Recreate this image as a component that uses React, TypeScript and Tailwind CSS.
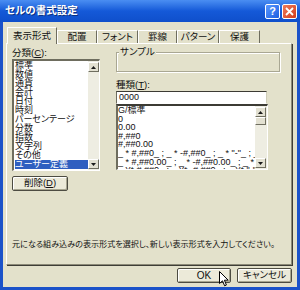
import React from "react";

const categories = [
  "標準",
  "数値",
  "通貨",
  "会計",
  "日付",
  "時刻",
  "パーセンテージ",
  "分数",
  "指数",
  "文字列",
  "その他",
  "ユーザー定義",
];

const formats = [
  "G/標準",
  "0",
  "0.00",
  "#,##0",
  "#,##0.00",
  '_ * #,##0_ ; _ * -#,##0_ ; _ * "-"_ ; _ @_',
  '_ * #,##0.00_ ; _ * -#,##0.00_ ; _ * "-"??_ ; _ @_',
  '_ ¥* #,##0_ ; _ ¥* -#,##0_ ; _ ¥* "-"_ ; _ @_',
];

const tabs = [
  { label: "表示形式", w: "w-[50px]", active: true },
  { label: "配置", w: "w-[40px]", active: false },
  { label: "フォント", w: "w-[41px]", active: false },
  { label: "罫線", w: "w-[39px]", active: false },
  { label: "パターン", w: "w-[42px]", active: false },
  { label: "保護", w: "w-[41px]", active: false },
];

// little arrow button used on the scroll bars
const ScrollBtn = ({ up }: { up: boolean }) => (
  <div className="flex h-[10px] w-[11px] items-center justify-center border border-b-[#6f6e60] border-l-white border-r-[#6f6e60] border-t-white bg-[#e3e1d2]">
    <svg width="5" height="3" viewBox="0 0 5 3">
      <path d={up ? "M2.5 0L5 3H0z" : "M0 0h5L2.5 3z"} fill="#1a1a1a" />
    </svg>
  </div>
);

const Button = ({ children, className }: { children: React.ReactNode; className: string }) => (
  <div
    className={`flex items-center justify-center rounded-[2px] border border-[#4d4c42] bg-[#ecead9] shadow-[inset_1px_1px_0_#fff,inset_-1px_-1px_0_#a8a690] ${className}`}
  >
    {children}
  </div>
);

export default function App() {
  return (
    <div className="flex h-[290px] w-[300px] flex-col bg-[#1b52c9] font-['Liberation_Sans','Noto_Sans_CJK_JP',sans-serif] text-[#111] [font-feature-settings:'palt']">
      {/* title bar */}
      <div className="flex h-[22px] items-center bg-gradient-to-b from-[#4a8ef2] via-[#1459d8] to-[#0f4fcb] pl-[5px] pr-[3px]">
        <span className="text-[10.5px] font-bold text-white [text-shadow:1px_1px_0_#0a2f80]">
          セルの書式設定
        </span>
        <div className="ml-auto flex gap-[2px]">
          <div className="flex h-[15px] w-[15px] items-center justify-center rounded-[2px] border border-white bg-gradient-to-br from-[#5a98ff] to-[#1c5ee0] text-[11px] font-bold leading-none text-white">
            ?
          </div>
          <div className="flex h-[15px] w-[15px] items-center justify-center rounded-[2px] border border-white bg-gradient-to-br from-[#ee7a5a] to-[#d23a18]">
            <svg width="9" height="9" viewBox="0 0 9 9">
              <path d="M1 1L8 8M8 1L1 8" stroke="#fff" strokeWidth="1.8" />
            </svg>
          </div>
        </div>
      </div>

      {/* dialog body */}
      <div className="mx-[3px] mb-[3px] flex flex-1 flex-col bg-[#e3e1cb] pl-[3px] pr-[5px] pt-[5px]">
        {/* tabs */}
        <div className="relative z-10 flex h-[16px] items-end pl-[1px]">
          {tabs.map((t) => (
            <div
              key={t.label}
              className={`flex items-center justify-center border-l border-r border-t border-l-white border-r-[#6e6d5e] border-t-white text-[9.5px] ${t.w} ${
                t.active ? "-mb-[1px] h-[17px] bg-[#e3e1cb]" : "h-[13px] bg-[#e3e1cb]"
              }`}
            >
              {t.label}
            </div>
          ))}
        </div>

        {/* tab panel */}
        <div className="flex h-[222px] flex-col border-l border-t border-b border-r border-l-white border-t-white border-b-[#8c8a78] border-r-[#8c8a78] pl-[5px] pt-[3px] shadow-[1px_1px_0_#3e3d36]">
          <div className="flex gap-[16px]">
            {/* left column */}
            <div className="flex w-[88px] flex-col">
              <div className="h-[12px] text-[9.5px] leading-[12px]">
                分類(<u>C</u>):
              </div>
              <div className="flex h-[112px] border-b border-l-2 border-r border-t-2 border-b-white border-l-[#6e6d5e] border-r-white border-t-[#6e6d5e] bg-white">
                <div className="flex-1 overflow-hidden pl-[1px] text-[9px] leading-[9px]">
                  {categories.map((c) => (
                    <div
                      key={c}
                      className={`h-[9px] whitespace-nowrap ${
                        c === "ユーザー定義" ? "bg-[#2f5fc0] text-white" : ""
                      }`}
                    >
                      {c}
                    </div>
                  ))}
                </div>
                <div className="flex w-[11px] flex-col justify-between bg-[#eeede2] py-[1px]">
                  <ScrollBtn up />
                  <ScrollBtn up={false} />
                </div>
              </div>
              <Button className="mt-[5px] h-[15px] w-[56px] text-[9.5px]">
                削除(<u>D</u>)
              </Button>
            </div>

            {/* right column */}
            <div className="flex w-[164px] flex-col">
              <div className="relative mt-[5px] h-[20px] border border-[#a9a793] shadow-[inset_1px_1px_0_#fff,1px_1px_0_#fff]">
                <span className="absolute -top-[7px] left-[2px] bg-[#e3e1cb] px-[1px] text-[9.5px] leading-[12px]">
                  サンプル
                </span>
              </div>
              <div className="mt-[6px] h-[13px] text-[9.5px] leading-[13px]">
                種類(<u>T</u>):
              </div>
              <div className="h-[13px] w-[151px] border-b border-l border-r border-t border-b-white border-l-[#6e6d5e] border-r-[#cfcdb8] border-t-[#3c3b34] bg-white pl-[2px] text-[9px] leading-[11px]">
                0000
              </div>
              <div className="flex h-[66px] w-[152px] border-b border-l-2 border-r border-t-2 border-b-white border-l-[#6e6d5e] border-r-white border-t-[#3c3b34] bg-white">
                <div className="flex-1 overflow-hidden text-[9px] leading-[8.6px]">
                  {formats.map((f) => (
                    <div key={f} className="h-[8.6px] whitespace-pre">
                      {f}
                    </div>
                  ))}
                </div>
                <div className="flex w-[12px] flex-col bg-[#eeede2] py-[1px]">
                  <ScrollBtn up />
                  <div className="h-[8px] w-[11px] border border-b-[#6f6e60] border-l-white border-r-[#6f6e60] border-t-white bg-[#e3e1d2]" />
                  <div className="flex-1" />
                  <ScrollBtn up={false} />
                </div>
              </div>
            </div>
          </div>

          <div className="mt-auto mb-[14px] whitespace-nowrap pl-[0px] text-[8.1px] leading-[10px]">
            元になる組み込みの表示形式を選択し、新しい表示形式を入力してください。
          </div>
        </div>

        {/* bottom buttons */}
        <div className="relative mt-[3px] flex justify-end gap-[6px]">
          <Button className="h-[15px] w-[54px] border-[#1f1f1a] text-[10px]">OK</Button>
          <Button className="h-[15px] w-[55px] text-[9.5px]">キャンセル</Button>
          <svg
            className="absolute left-[213px] top-[3px]"
            width="10"
            height="16"
            viewBox="0 0 10 16"
          >
            <path
              d="M0.5 0.5V12.5L3.5 9.8L5.6 14.8L7.4 14L5.4 9.2H9.2Z"
              fill="#fff"
              stroke="#000"
              strokeWidth="1"
              strokeLinejoin="round"
            />
          </svg>
        </div>
      </div>
    </div>
  );
}
